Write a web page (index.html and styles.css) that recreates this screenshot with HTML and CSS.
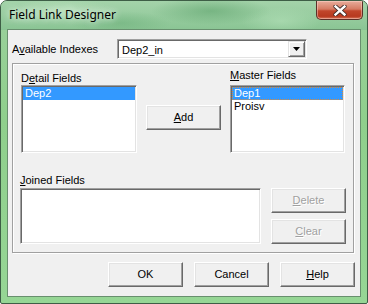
FILE: index.html
```html
<!DOCTYPE html>
<html lang="en">
<head>
  <meta charset="UTF-8">
  <title>Field Link Designer</title>
  <link rel="stylesheet" href="styles.css">
</head>
<body>
  <div class="window">
    <div class="titlebar">
      <span class="title">Field Link Designer</span>
      <div class="close">
        <svg width="14" height="11" viewBox="0 0 14 11">
          <path d="M2.5 1.5 L11.5 9.5 M11.5 1.5 L2.5 9.5" stroke="#3a2a28" stroke-width="4.2" stroke-linecap="round" fill="none"/>
          <path d="M2.5 1.5 L11.5 9.5 M11.5 1.5 L2.5 9.5" stroke="#fff" stroke-width="2.4" stroke-linecap="square" fill="none"/>
        </svg>
      </div>
    </div>

    <div class="client">
      <div class="index-row">
        <span class="index-label">A<u>v</u>ailable Indexes</span>
        <div class="combo">
          <span class="combo-text">Dep2_in</span>
          <span class="combo-btn">
            <svg width="7" height="4" viewBox="0 0 7 4"><path d="M0 0 H7 L3.5 4 Z" fill="#000"/></svg>
          </span>
        </div>
      </div>

      <div class="group">
        <div class="fields-row">
          <div class="field-col detail">
            <div class="label">D<u>e</u>tail Fields</div>
            <div class="listbox short">
              <div class="item selected">Dep2</div>
            </div>
          </div>
          <div class="add-col">
            <div class="btn"><span><u>A</u>dd</span></div>
          </div>
          <div class="field-col master">
            <div class="label raised"><u>M</u>aster Fields</div>
            <div class="listbox short">
              <div class="item selected focused">Dep1</div>
              <div class="item">Proisv</div>
            </div>
          </div>
        </div>

        <div class="joined-row">
          <div class="joined-col">
            <div class="label"><u>J</u>oined Fields</div>
            <div class="listbox joined"></div>
          </div>
          <div class="side-btns">
            <div class="btn disabled"><span><u>D</u>elete</span></div>
            <div class="btn disabled"><span><u>C</u>lear</span></div>
          </div>
        </div>
      </div>

      <div class="footer">
        <div class="btn"><span>OK</span></div>
        <div class="btn"><span>Cancel</span></div>
        <div class="btn"><span><u>H</u>elp</span></div>
      </div>
    </div>
  </div>
</body>
</html>
```

FILE: styles.css
```css
body {
  margin: 0;
  background: #ffffff;
}

.window {
  width: 368px;
  height: 304px;
  box-sizing: border-box;
  border: 1px solid #3e5e46;
  border-radius: 7px 7px 2px 2px;
  background: linear-gradient(to bottom, #9bd09d, #8fcf8c 40%, #96d695);
  overflow: hidden;
}

.titlebar {
  height: 29px;
  display: flex;
  align-items: flex-start;
  background:
    radial-gradient(ellipse 60px 14px at 210px 10px, rgba(90, 160, 105, 0.55), transparent),
    radial-gradient(ellipse 50px 12px at 120px 22px, rgba(100, 170, 115, 0.45), transparent),
    radial-gradient(ellipse 40px 14px at 280px 20px, rgba(180, 225, 185, 0.6), transparent),
    radial-gradient(ellipse 50px 10px at 60px 8px, rgba(190, 228, 192, 0.6), transparent),
    linear-gradient(to bottom, #a4d3aa, #8ac594);
}

.title {
  padding: 6px 0 0 8px;
  font-family: "Noto Sans", "Open Sans", sans-serif;
  font-size: 12px;
  line-height: 16px;
  color: #000;
  text-shadow: 0 0 6px #e8f5ea, 0 0 10px #e8f5ea;
}

.close {
  margin-left: auto;
  margin-right: 4px;
  width: 47px;
  height: 19px;
  box-sizing: border-box;
  border: 1px solid #5b3028;
  border-top: none;
  border-radius: 0 0 5px 5px;
  background: linear-gradient(to bottom, #e8ad9c, #d57b63 45%, #c1462b 55%, #b7391f 85%, #d8795d);
  box-shadow: inset 0 0 0 1px rgba(255, 220, 210, 0.45);
  display: flex;
  align-items: center;
  justify-content: center;
}

.client {
  margin: 0 7px;
  height: 266px;
  background: #f0f0f0;
  box-shadow: 0 0 0 1px #688f6e;
  font-family: "Liberation Sans", Arial, sans-serif;
  font-size: 11px;
  line-height: 13px;
  color: #000;
  display: flex;
  flex-direction: column;
}

.index-row {
  display: flex;
  align-items: center;
  padding: 9px 0 0 4px;
}

.index-label {
  width: 105px;
}

.combo {
  width: 190px;
  height: 20px;
  box-sizing: border-box;
  background: #fff;
  border: 1px solid;
  border-color: #a0a0a0 #fff #fff #a0a0a0;
  box-shadow: inset 1px 1px 0 #696969, inset -1px -1px 0 #e3e3e3;
  display: flex;
  align-items: stretch;
  padding: 1px;
}

.combo-text {
  flex: 1;
  padding: 3px 0 0 3px;
}

.combo-btn {
  width: 17px;
  box-sizing: border-box;
  background: #f0f0f0;
  border: 1px solid;
  border-color: #e3e3e3 #696969 #696969 #e3e3e3;
  box-shadow: inset 1px 1px 0 #fff, inset -1px -1px 0 #a0a0a0;
  display: flex;
  align-items: center;
  justify-content: center;
}

.group {
  margin: 4px 0 0 4px;
  width: 342px;
  height: 190px;
  box-sizing: border-box;
  border: 1px solid #a0a0a0;
  box-shadow: inset 1px 1px 0 #fff, 1px 1px 0 #fff;
}

.fields-row {
  display: flex;
  align-items: flex-start;
  padding: 8px 0 0 8px;
}

.field-col.detail {
  width: 116px;
}

.field-col.master {
  width: 115px;
  margin-left: 9px;
}

.label.raised {
  margin: -3px 0 3px 0;
}

.add-col {
  margin: 33px 0 0 9px;
}

.listbox {
  box-sizing: border-box;
  background: #fff;
  border: 1px solid;
  border-color: #a0a0a0 #fff #fff #a0a0a0;
  box-shadow: inset 1px 1px 0 #696969, inset -1px -1px 0 #e3e3e3;
  padding: 1px;
}

.listbox.short {
  height: 68px;
}

.listbox.joined {
  width: 241px;
  height: 56px;
}

.item {
  height: 13px;
  padding-left: 2px;
  white-space: nowrap;
}

.item.selected {
  background: #3399ff;
  color: #fff;
}

.item.focused {
  outline: 1px dotted #d98a3a;
  outline-offset: -1px;
}

.joined-row {
  display: flex;
  align-items: flex-start;
  padding: 21px 0 0 7px;
}

.joined-col .label {
  margin-bottom: 1px;
}

.side-btns {
  display: flex;
  flex-direction: column;
  gap: 6px;
  margin: 14px 0 0 10px;
}

.btn {
  width: 75px;
  height: 25px;
  box-sizing: border-box;
  background: #f0f0f0;
  border: 1px solid;
  border-color: #fff #696969 #696969 #fff;
  box-shadow: inset -1px -1px 0 #a0a0a0, inset 1px 1px 0 #e3e3e3;
  display: flex;
  align-items: center;
  justify-content: center;
}

.btn.disabled {
  color: #a0a0a0;
  text-shadow: 1px 1px 0 #fff;
}

.footer {
  display: flex;
  justify-content: flex-end;
  gap: 11px;
  margin-top: 9px;
  padding-right: 5px;
}
```
